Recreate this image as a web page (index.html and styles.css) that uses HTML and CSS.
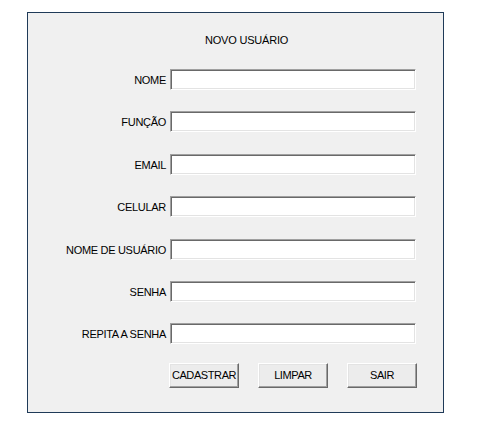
FILE: index.html
```html
<!DOCTYPE html>
<html lang="pt-BR">
<head>
<meta charset="utf-8">
<title>Novo Usuário</title>
<link rel="stylesheet" href="styles.css">
</head>
<body>
<div class="panel">
  <div class="title">NOVO USUÁRIO</div>
  <form class="form">
    <label class="lbl">NOME</label><input class="field" type="text">
    <label class="lbl">FUNÇÃO</label><input class="field" type="text">
    <label class="lbl">EMAIL</label><input class="field" type="text">
    <label class="lbl">CELULAR</label><input class="field" type="text">
    <label class="lbl">NOME DE USUÁRIO</label><input class="field" type="text">
    <label class="lbl">SENHA</label><input class="field" type="password">
    <label class="lbl">REPITA A SENHA</label><input class="field" type="password">
  </form>
  <div class="buttons">
    <button class="btn" type="button">CADASTRAR</button>
    <button class="btn" type="button">LIMPAR</button>
    <button class="btn" type="button">SAIR</button>
  </div>
</div>
</body>
</html>
```
FILE: styles.css
```css
html, body {
  margin: 0;
  padding: 0;
  background: #ffffff;
}
body {
  font-family: "Liberation Sans", Arial, sans-serif;
  font-size: 11px;
  color: #000;
}
.panel {
  margin: 12px 0 0 27px;
  width: 415px;
  height: 399px;
  border: 1px solid #1f3a58;
  background: #f0f0f0;
  box-sizing: content-box;
}
.title {
  padding: 20px 0 0 177px;
  height: 14px;
  line-height: 14px;
  letter-spacing: -0.2px;
}
.form {
  display: grid;
  grid-template-columns: 138px 246px;
  grid-auto-rows: 21px;
  column-gap: 4px;
  row-gap: 21.4px;
  margin: 22px 0 0 0;
  align-items: center;
}
.lbl {
  text-align: right;
  white-space: nowrap;
  letter-spacing: -0.3px;
  padding-top: 1px;
}
.field {
  box-sizing: border-box;
  width: 246px;
  height: 21px;
  margin: 0;
  padding: 0 2px;
  background: #fff;
  border: 1px solid;
  border-color: #a0a0a0 #ffffff #ffffff #a0a0a0;
  box-shadow: inset 1px 1px 0 #696969, inset -1px -1px 0 #e3e3e3;
  outline: none;
  font: inherit;
}
.buttons {
  display: flex;
  gap: 19px;
  margin: 19px 0 0 141px;
}
.btn {
  box-sizing: border-box;
  width: 70px;
  height: 25px;
  margin: 0;
  padding: 0 0 2px;
  background: #ececec;
  border: 1px solid;
  border-color: #ffffff #696969 #696969 #ffffff;
  box-shadow: inset -1px -1px 0 #a0a0a0, inset 1px 1px 0 #e3e3e3;
  font: inherit;
  letter-spacing: -0.4px;
  color: #000;
}
```
